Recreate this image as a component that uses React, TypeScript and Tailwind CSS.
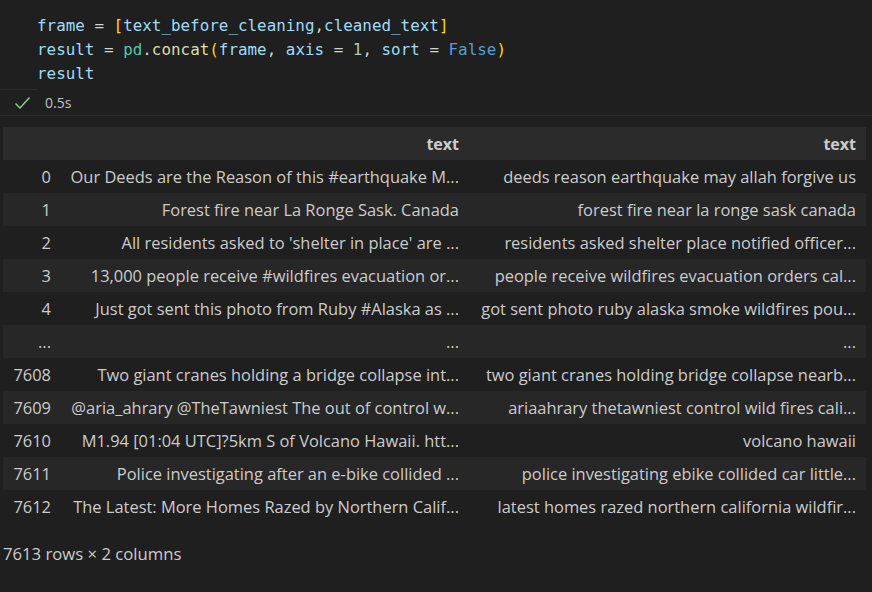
const rows: [string, string, string][] = [
  ["0", "Our Deeds are the Reason of this #earthquake M...", "deeds reason earthquake may allah forgive us"],
  ["1", "Forest fire near La Ronge Sask. Canada", "forest fire near la ronge sask canada"],
  ["2", "All residents asked to 'shelter in place' are ...", "residents asked shelter place notified officer..."],
  ["3", "13,000 people receive #wildfires evacuation or...", "people receive wildfires evacuation orders cal..."],
  ["4", "Just got sent this photo from Ruby #Alaska as ...", "got sent photo ruby alaska smoke wildfires pou..."],
  ["...", "...", "..."],
  ["7608", "Two giant cranes holding a bridge collapse int...", "two giant cranes holding bridge collapse nearb..."],
  ["7609", "@aria_ahrary @TheTawniest The out of control w...", "ariaahrary thetawniest control wild fires cali..."],
  ["7610", "M1.94 [01:04 UTC]?5km S of Volcano Hawaii. htt...", "volcano hawaii"],
  ["7611", "Police investigating after an e-bike collided ...", "police investigating ebike collided car little..."],
  ["7612", "The Latest: More Homes Razed by Northern Calif...", "latest homes razed northern california wildfir..."],
];

export default function App() {
  return (
    <div className="w-[872px] h-[592px] overflow-hidden bg-[#1f1f1f] font-['Open_Sans',sans-serif] text-[#cccccc]">
      {/* code cell */}
      <div className="pt-[14px] pl-[37px] font-['DejaVu_Sans_Mono',monospace] text-[15.9px] leading-6 text-[#9cdcfe] whitespace-pre h-[89px]">
        <div>
          frame <span className="text-[#d4d4d4]">=</span> <span className="text-[#ffd700]">[</span>text_before_cleaning<span className="text-[#d4d4d4]">,</span>cleaned_text<span className="text-[#ffd700]">]</span>
        </div>
        <div>
          result <span className="text-[#d4d4d4]">=</span> <span className="text-[#4ec9b0]">pd</span><span className="text-[#d4d4d4]">.</span><span className="text-[#dcdcaa]">concat</span><span className="text-[#ffd700]">(</span>frame<span className="text-[#d4d4d4]">,</span> axis <span className="text-[#d4d4d4]">=</span> <span className="text-[#b5cea8]">1</span><span className="text-[#d4d4d4]">,</span> sort <span className="text-[#d4d4d4]">=</span> <span className="text-[#569cd6]">False</span><span className="text-[#ffd700]">)</span>
        </div>
        <div>result</div>
      </div>
      <div className="w-[37px] border-t border-[#2b2b2b]" />
      <div className="h-[26px] flex items-center border-b border-[#2b2b2b]">
        <svg className="ml-[14px]" width="17" height="14" viewBox="0 0 17 14" fill="none">
          <path d="M1.5 7.5 L6 12 L15.5 1.5" stroke="#89d185" strokeWidth="1.5" />
        </svg>
        <span className="ml-[14px] text-[14px] text-[#c2c2c2]">0.5s</span>
      </div>

      {/* dataframe output */}
      <table className="mt-[11px] ml-[3px] w-[863px] table-fixed border-collapse text-[16.45px] leading-6">
        <colgroup>
          <col className="w-[58px]" />
          <col className="w-[408px]" />
          <col className="w-[397px]" />
        </colgroup>
        <thead>
          <tr className="h-[33px] bg-[#2b2b2b]">
            <th className="pr-[10px]" />
            <th className="pr-[10px] text-right font-bold text-[16px]">text</th>
            <th className="pr-[10px] text-right font-bold text-[16px]">text</th>
          </tr>
        </thead>
        <tbody>
          {rows.map((r, i) => (
            <tr key={i} className={`h-[33px] ${i % 2 === 1 ? "bg-[#272727]" : "bg-[#1f1f1f]"}`}>
              <td className="pr-[10px] text-right whitespace-nowrap">{r[0]}</td>
              <td className="pr-[10px] text-right whitespace-nowrap overflow-hidden">{r[1]}</td>
              <td className="pr-[10px] text-right whitespace-nowrap overflow-hidden">{r[2]}</td>
            </tr>
          ))}
        </tbody>
      </table>
      <div className="mt-[19px] ml-[3px] text-[16.7px] leading-6">7613 rows × 2 columns</div>
    </div>
  );
}
